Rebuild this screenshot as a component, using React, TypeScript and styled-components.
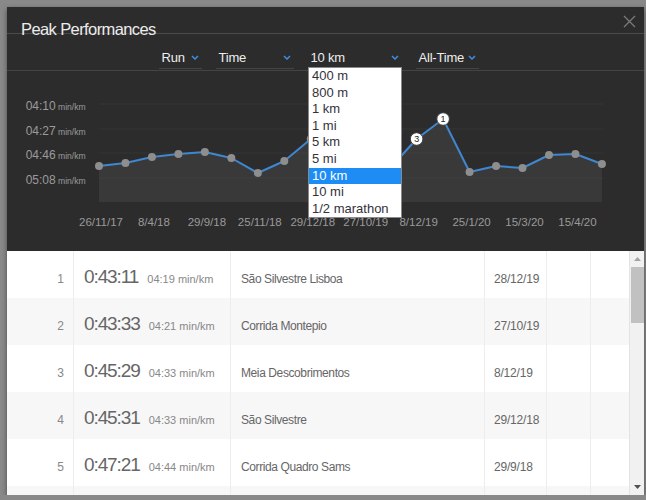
import styled, { createGlobalStyle } from 'styled-components';

const GlobalStyle = createGlobalStyle`
  body {
    margin: 0;
    background: #898989;
    font-family: "Liberation Sans", Arial, sans-serif;
  }
`;

const Modal = styled.div`
  margin: 7px 0 0 7px;
  width: 637px;
  height: 488px;
  background: #2c2c2c;
  display: flex;
  flex-direction: column;
  overflow: hidden;
  box-shadow: 0 2px 5px rgba(0, 0, 0, 0.45);
`;

const Header = styled.div`
  height: 26px;
  border-bottom: 1px solid #4c4c4c;
  display: flex;
  justify-content: space-between;
  padding: 0 8px 0 14px;
`;

const Title = styled.h1`
  margin: 0;
  padding-top: 12px;
  line-height: 20px;
  font-size: 16.5px;
  font-weight: normal;
  letter-spacing: -0.6px;
  color: #ececec;
  white-space: nowrap;
`;

const CloseButton = styled.button`
  margin-top: 8px;
  width: 13px;
  height: 13px;
  padding: 0;
  border: none;
  background: none;
  display: flex;
`;

const FilterBar = styled.div`
  height: 36px;
  border-bottom: 1px solid #444;
  display: flex;
  align-items: flex-start;
  gap: 14px;
  padding-left: 152px;
`;

const Select = styled.div<{ $width: number }>`
  position: relative;
  width: ${(p) => p.$width}px;
  height: 21px;
  margin-top: 13px;
  border-bottom: 1px solid #454545;
  display: flex;
  align-items: center;
  justify-content: space-between;
  padding: 0 3px 0 2.5px;
  box-sizing: content-box;
  font-size: 13px;
  letter-spacing: -0.2px;
  color: #eeeeee;
`;

const Dropdown = styled.ul`
  position: absolute;
  top: calc(100% - 1px);
  left: 0;
  width: 94px;
  box-sizing: border-box;
  margin: 0;
  padding: 0;
  list-style: none;
  background: #fff;
  border: 1px solid #8a8a8a;
  z-index: 10;
`;

const Option = styled.li<{ $selected?: boolean }>`
  height: 16.6px;
  line-height: 16.6px;
  padding-left: 3px;
  font-size: 13px;
  letter-spacing: 0;
  color: ${(p) => (p.$selected ? '#fff' : '#35313a')};
  background: ${(p) => (p.$selected ? '#1e8cf5' : 'transparent')};
`;

const ChartArea = styled.div`
  height: 180px;
  flex-shrink: 0;
`;

const TableArea = styled.div`
  flex: 1;
  display: flex;
  background: #fff;
  overflow: hidden;
`;

const TableBody = styled.div`
  flex: 1;
  overflow: hidden;
`;

const Row = styled.div<{ $alt: boolean }>`
  display: grid;
  grid-template-columns: 66px 157px 254px 62px 44px 1fr;
  height: 47px;
  background: ${(p) => (p.$alt ? '#f7f7f7' : '#fff')};
`;

const Cell = styled.div`
  padding-top: 19px;
  line-height: 18px;
  font-size: 12px;
  color: #666;
  white-space: nowrap;
  border-left: 1px solid #ededed;
  &:first-child {
    border-left: none;
  }
`;

const RankCell = styled(Cell)`
  text-align: right;
  padding-right: 9px;
  color: #888;
`;

const TimeCell = styled(Cell)`
  padding-top: 17px;
  padding-left: 10px;
`;

const Time = styled.span`
  font-size: 19px;
  font-weight: 300;
  letter-spacing: -1.1px;
  color: #666;
`;

const Pace = styled.span`
  margin-left: 9px;
  font-size: 11px;
  color: #888;
`;

const NameCell = styled(Cell)`
  padding-left: 10px;
  letter-spacing: -0.4px;
`;

const DateCell = styled(Cell)`
  padding-left: 9px;
  letter-spacing: -0.2px;
`;

const ScrollTrack = styled.div`
  width: 14px;
  background: #f1f1f1;
  border-left: 1px solid #e3e3e3;
  display: flex;
  flex-direction: column;
`;

const ScrollButton = styled.div`
  height: 16px;
  display: flex;
  align-items: center;
  justify-content: center;
`;

const ScrollThumb = styled.div`
  height: 56px;
  margin: 0 0 0 1px;
  background: #c1c1c1;
`;

const ScrollSpace = styled.div`
  flex: 1;
`;

const Chevron = () => (
  <svg width="8" height="5" viewBox="0 0 8 5">
    <polyline points="1,1 4,4 7,1" fill="none" stroke="#3d8ee0" strokeWidth="1.5" />
  </svg>
);

const filters = [
  { label: 'Run', width: 37.5 },
  { label: 'Time', width: 72.5 },
  { label: '10 km', width: 88.5, open: true },
  { label: 'All-Time', width: 57.5 },
];

const distances = ['400 m', '800 m', '1 km', '1 mi', '5 km', '5 mi', '10 km', '10 mi', '1/2 marathon'];

// page y of each point, chart starts at page y 71
const pointY = [166, 163, 157, 154, 152, 158, 173, 161, 139, 150, 122, 168, 139, 119, 172, 166, 168, 155, 154, 164];
const ranks: Record<number, number> = { 13: 1, 10: 2, 12: 3 };
const dateLabels = ['26/11/17', '8/4/18', '29/9/18', '25/11/18', '29/12/18', '27/10/19', '8/12/19', '25/1/20', '15/3/20', '15/4/20'];
const axis = [
  { label: '04:10', y: 33 },
  { label: '04:27', y: 58 },
  { label: '04:46', y: 82 },
  { label: '05:08', y: 107 },
];

const rows = [
  { rank: 1, time: '0:43:11', pace: '04:19', name: 'São Silvestre Lisboa', date: '28/12/19' },
  { rank: 2, time: '0:43:33', pace: '04:21', name: 'Corrida Montepio', date: '27/10/19' },
  { rank: 3, time: '0:45:29', pace: '04:33', name: 'Meia Descobrimentos', date: '8/12/19' },
  { rank: 4, time: '0:45:31', pace: '04:33', name: 'São Silvestre', date: '29/12/18' },
  { rank: 5, time: '0:47:21', pace: '04:44', name: 'Corrida Quadro Sams', date: '29/9/18' },
];

function Chart() {
  const pts = pointY.map((y, i) => ({ x: 92 + i * 26.47, y: y - 71 }));
  const line = pts.map((p, i) => `${i ? 'L' : 'M'}${p.x.toFixed(1)},${p.y}`).join(' ');
  const area = `${line} L${pts[pts.length - 1].x.toFixed(1)},131 L${pts[0].x},131 Z`;
  return (
    <svg width="637" height="180" viewBox="0 0 637 180">
      <path d={area} fill="#393939" />
      {axis.map((a) => (
        <g key={a.label}>
          <line x1="92" x2="596" y1={a.y} y2={a.y} stroke="rgba(255,255,255,0.045)" />
          <text x="18.7" y={a.y + 5.8} fontSize="12" fill="#9b9b9b">{a.label}</text>
          <text x="51" y={a.y + 5.8} fontSize="8.6" fill="#9b9b9b">min/km</text>
        </g>
      ))}
      <path d={line} fill="none" stroke="#3f87d0" strokeWidth="2" strokeLinejoin="round" />
      {pts.map((p, i) =>
        ranks[i] ? (
          <g key={i}>
            <circle cx={p.x} cy={p.y} r="6.3" fill="#fff" stroke="#3a3a3a" strokeWidth="1" />
            <text x={p.x} y={p.y + 3.2} fontSize="9" textAnchor="middle" fill="#222">{ranks[i]}</text>
          </g>
        ) : (
          <circle key={i} cx={p.x} cy={p.y} r="4" fill="#8e8e8e" />
        )
      )}
      {dateLabels.map((d, k) => (
        <text key={d} x={94 + k * 52.94} y="155" fontSize="11.5" textAnchor="middle" fill="#9a9a9a">
          {d}
        </text>
      ))}
    </svg>
  );
}

export default function App() {
  return (
    <>
      <GlobalStyle />
      <Modal>
        <Header>
          <Title>Peak Performances</Title>
          <CloseButton>
            <svg width="13" height="13" viewBox="0 0 13 13">
              <path d="M1 1 L12 12 M12 1 L1 12" stroke="#7a7a7a" strokeWidth="1.3" />
            </svg>
          </CloseButton>
        </Header>
        <FilterBar>
          {filters.map((f) => (
            <Select key={f.label} $width={f.width}>
              <span>{f.label}</span>
              <Chevron />
              {f.open && (
                <Dropdown>
                  {distances.map((d) => (
                    <Option key={d} $selected={d === f.label}>{d}</Option>
                  ))}
                </Dropdown>
              )}
            </Select>
          ))}
        </FilterBar>
        <ChartArea>
          <Chart />
        </ChartArea>
        <TableArea>
          <TableBody>
            {rows.map((r, i) => (
              <Row key={r.rank} $alt={i % 2 === 1}>
                <RankCell>{r.rank}</RankCell>
                <TimeCell>
                  <Time>{r.time}</Time>
                  <Pace>{r.pace} min/km</Pace>
                </TimeCell>
                <NameCell>{r.name}</NameCell>
                <DateCell>{r.date}</DateCell>
                <Cell />
                <Cell />
              </Row>
            ))}
            <Row $alt>
              <RankCell />
              <TimeCell />
              <NameCell />
              <DateCell />
              <Cell />
              <Cell />
            </Row>
          </TableBody>
          <ScrollTrack>
            <ScrollButton>
              <svg width="7" height="4" viewBox="0 0 7 4">
                <polygon points="0,4 3.5,0 7,4" fill="#a3a3a3" />
              </svg>
            </ScrollButton>
            <ScrollThumb />
            <ScrollSpace />
            <ScrollButton>
              <svg width="7" height="4" viewBox="0 0 7 4">
                <polygon points="0,0 3.5,4 7,0" fill="#505050" />
              </svg>
            </ScrollButton>
          </ScrollTrack>
        </TableArea>
      </Modal>
    </>
  );
}
